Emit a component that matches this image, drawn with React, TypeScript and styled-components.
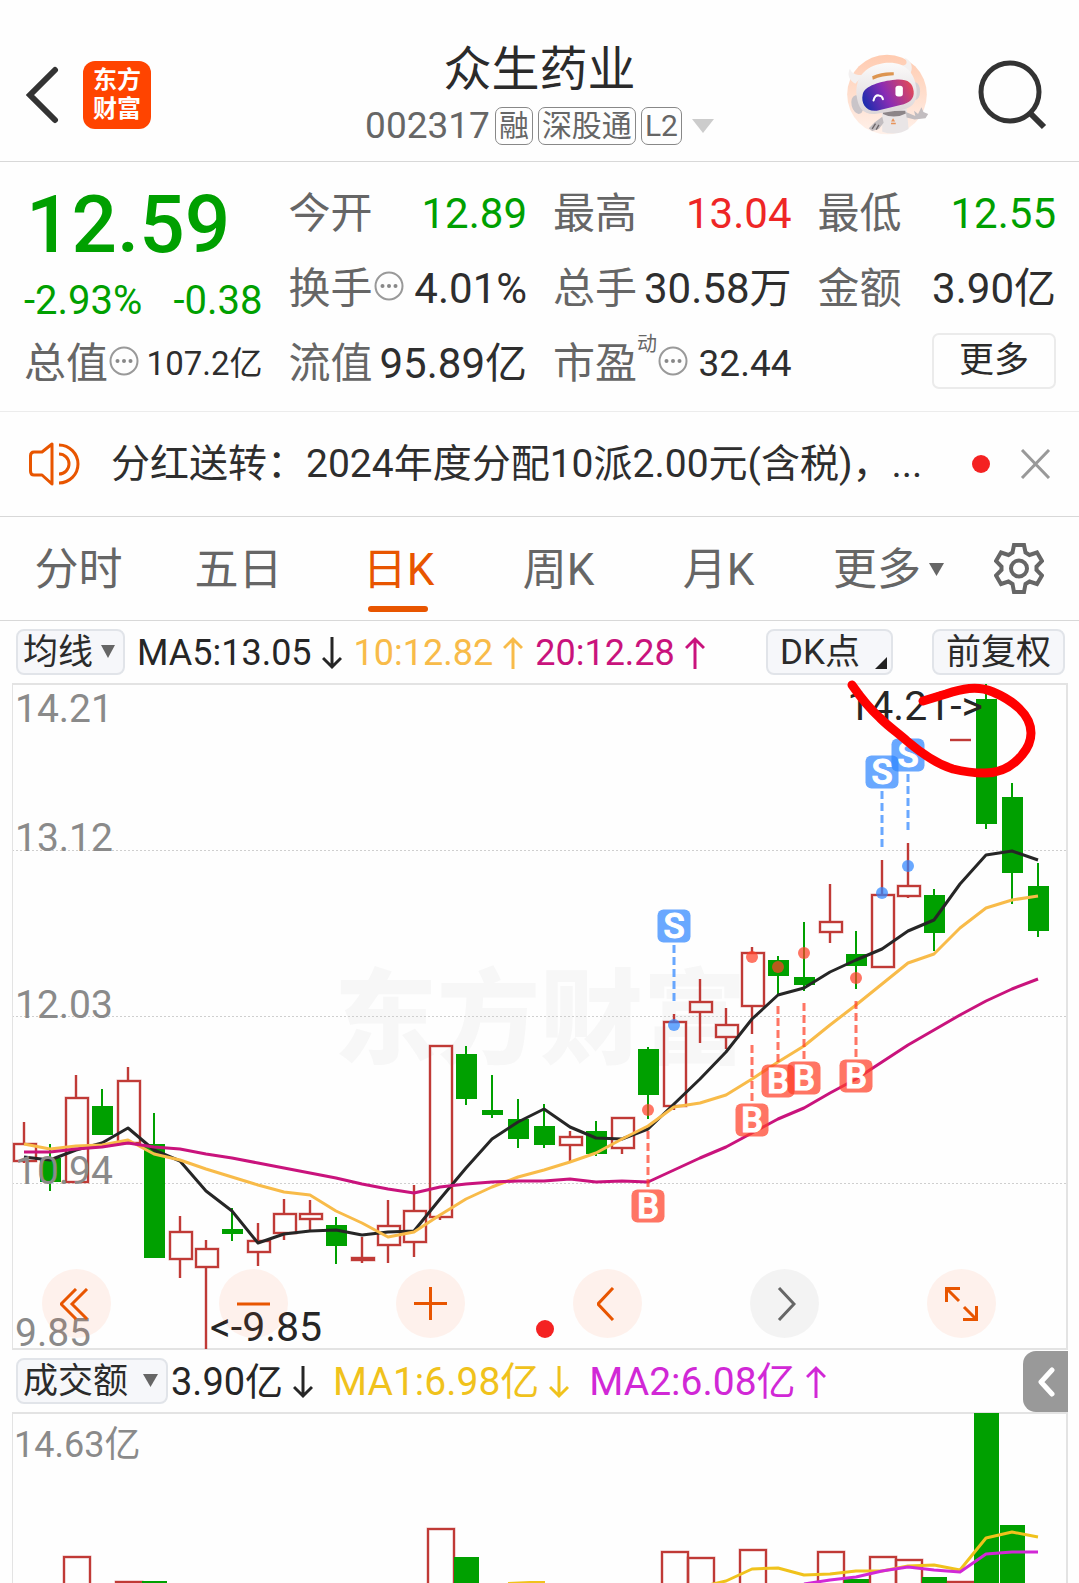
import React from 'react';
import styled, { createGlobalStyle } from 'styled-components';

const FONT = 'Roboto, "Noto Sans CJK SC", sans-serif';
const GREEN = '#00a000';
const RED = '#c03a36';
const ORANGE = '#e85500';

const Global = createGlobalStyle`
  *, *::before, *::after { box-sizing: border-box; }
  body { margin: 0; background: #fefefe; color: #2b2b2b; font-family: ${FONT}; }
  button, select { font: inherit; color: inherit; border: 0; background: none; padding: 0; margin: 0; cursor: pointer; }
  svg { display: block; flex: none; }
  h1, p { margin: 0; font-weight: 400; }
`;

const Page = styled.main`
  display: flex;
  flex-direction: column;
  overflow: hidden;
`;

/* ---------- header ---------- */
const Header = styled.header`
  display: grid;
  grid-template-columns: 1fr auto 1fr;
  align-items: center;
  height: 162px;
  padding: 28px 26px 0;
  border-bottom: 1px solid #d8d8d8;
`;
const HeaderSide = styled.div<{ $end?: boolean }>`
  display: flex;
  align-items: center;
  justify-content: ${p => (p.$end ? 'flex-end' : 'flex-start')};
  gap: ${p => (p.$end ? '38px' : '24px')};
  padding-right: ${p => (p.$end ? '6px' : '0')};
`;
const Logo = styled.a`
  display: grid;
  place-content: center;
  width: 68px;
  height: 68px;
  border-radius: 12px;
  background: #ff4400;
  color: #fff;
  font-size: 24px;
  line-height: 29px;
  font-weight: 700;
  text-decoration: none;
`;
const TitleBlock = styled.div`
  display: flex;
  flex-direction: column;
  align-items: center;
  gap: 12px;
`;
const Title = styled.h1`
  font-size: 48px;
  line-height: 50px;
`;
const CodeButton = styled.button`
  display: flex;
  align-items: center;
  gap: 4px;
  color: #666;
  font-size: 37px;
  line-height: 38px;
`;
const Tag = styled.span`
  height: 38px;
  margin-left: 1px;
  padding: 0 3px;
  border: 1px solid #888;
  border-radius: 7px;
  font-size: 30px;
  line-height: 36px;
`;
const CodeCaret = styled.svg`
  margin-left: 6px;
`;

/* ---------- quote ---------- */
const Quote = styled.section`
  display: grid;
  grid-template-columns: repeat(4, 1fr);
  grid-template-rows: repeat(3, 75px);
  column-gap: 26px;
  padding: 14px 23px 10px 24px;
  border-bottom: 1px solid #ececec;
`;
const PriceBlock = styled.div`
  grid-row: span 2;
  color: ${GREEN};
`;
const Price = styled.p`
  padding-left: 2px;
  font-size: 80px;
  line-height: 98px;
  font-weight: 500;
`;
const Change = styled.p`
  display: flex;
  justify-content: space-between;
  font-size: 40px;
  line-height: 54px;
`;
const Cell = styled.div`
  display: flex;
  align-items: center;
  white-space: nowrap;
`;
const CellLabel = styled.span`
  color: #666;
  font-size: 42px;
  line-height: 75px;
`;
const CellSup = styled.span`
  align-self: flex-start;
  margin-top: 8px;
  color: #666;
  font-size: 20px;
  line-height: 20px;
`;
const CellValue = styled.span<{ $color?: string; $size?: number }>`
  margin-left: auto;
  color: ${p => p.$color ?? '#2e2e2e'};
  font-size: ${p => p.$size ?? 42}px;
  line-height: 75px;
`;
const MoreButton = styled.button`
  justify-self: end;
  align-self: center;
  width: 124px;
  height: 56px;
  margin-bottom: 6px;
  border: 2px solid #ebebeb;
  border-radius: 7px;
  font-size: 35px;
  line-height: 50px;
`;

/* ---------- notice ---------- */
const Notice = styled.section`
  display: flex;
  align-items: center;
  height: 105px;
  padding: 0 28px 1px 28px;
  border-bottom: 1px solid #d8d8d8;
`;
const NoticeText = styled.p`
  flex: 1;
  margin-left: 31px;
  white-space: nowrap;
  overflow: hidden;
  font-size: 39px;
  line-height: 60px;
  color: #2e2e2e;
`;
const Dot = styled.span`
  width: 18px;
  height: 18px;
  margin-right: 30px;
  border-radius: 50%;
  background: #f42222;
`;

/* ---------- tabs ---------- */
const Tabs = styled.nav`
  display: grid;
  grid-template-columns: repeat(5, 160fr) 180fr 99fr;
  height: 104px;
  border-bottom: 1px solid #d8d8d8;
`;
const Tab = styled.button<{ $active?: boolean }>`
  position: relative;
  display: flex;
  align-items: center;
  justify-content: center;
  gap: 8px;
  padding: 2px 3px 0 0;
  color: ${p => (p.$active ? ORANGE : '#666')};
  font-size: 44px;
  line-height: 60px;
  &::after {
    content: '';
    display: ${p => (p.$active ? 'block' : 'none')};
    position: absolute;
    bottom: 8px;
    left: 50%;
    width: 60px;
    height: 6px;
    margin-left: -32px;
    border-radius: 3px;
    background: ${ORANGE};
  }
`;
const GearButton = styled.button`
  padding: 0 0 1px 14px;
`;

/* ---------- indicator bars ---------- */
const IndicatorBar = styled.div`
  display: flex;
  align-items: center;
  height: 62px;
  padding: 0 14px 0 16px;
  white-space: nowrap;
`;
const SelectBox = styled.label<{ $width: number }>`
  position: relative;
  width: ${p => p.$width}px;
  height: 46px;
  border: 2px solid #e1e4e9;
  border-radius: 8px;
  background: #f6f7fa;
  select {
    width: 100%;
    height: 100%;
    padding: 2px 0 0 5px;
    appearance: none;
    font-size: 35px;
    line-height: 40px;
    outline: none;
  }
  svg {
    position: absolute;
    right: 8px;
    top: 14px;
    pointer-events: none;
  }
`;
const ChipButton = styled.button<{ $gap?: boolean }>`
  display: flex;
  align-items: center;
  height: 46px;
  padding: 2px ${p => (p.$gap ? '4px' : '12px')} 0 12px;
  margin-left: ${p => (p.$gap ? 'auto' : '39px')};
  gap: 15px;
  border: 2px solid #e1e4e9;
  border-radius: 8px;
  background: #f6f7fa;
  font-size: 35px;
  line-height: 40px;
  svg { align-self: flex-end; margin-bottom: 4px; }
`;
const Reading = styled.span<{ $color: string; $size: number; $lead: number }>`
  display: flex;
  align-items: center;
  gap: 10px;
  margin-left: ${p => p.$lead}px;
  padding-top: 1px;
  color: ${p => p.$color};
  font-size: ${p => p.$size}px;
  line-height: 60px;
`;
const SideTab = styled.button`
  display: grid;
  place-items: center;
  width: 45px;
  height: 61px;
  margin: 1px -3px 0 auto;
  border-radius: 13px 0 0 13px;
  background: #999;
`;

/* ---------- charts ---------- */
const ChartArea = styled.section`
  position: relative;
  margin: 0 11px 0 12px;
`;
const ChartSvg = styled.svg`
  width: 100%;
  height: auto;
  overflow: visible;
  font-family: ${FONT};
`;
const Controls = styled.div`
  position: absolute;
  left: 30px;
  right: 72px;
  bottom: 12px;
  display: flex;
  justify-content: space-between;
`;
const RoundButton = styled.button<{ $muted?: boolean }>`
  display: grid;
  place-items: center;
  width: 69px;
  height: 69px;
  border-radius: 50%;
  background: ${p => (p.$muted ? 'rgba(0,0,0,0.045)' : 'rgba(255,95,20,0.08)')};
  color: ${p => (p.$muted ? '#666' : ORANGE)};
`;

const X0 = 24;
const STEP = 26;
const cx = (i: number) => X0 + i * STEP;

type Candle = ['r' | 'g', number, number, number, number];
const candles: Candle[] = [
  ['r', 1122, 1144, 1161, 1163], ['g', 1144, 1158, 1182, 1191], ['r', 1075, 1098, 1182, 1183],
  ['g', 1089, 1106, 1135, 1135], ['r', 1067, 1081, 1143, 1143], ['g', 1113, 1144, 1258, 1258],
  ['r', 1216, 1232, 1259, 1278], ['r', 1240, 1249, 1267, 1349], ['g', 1208, 1229, 1234, 1241],
  ['r', 1223, 1241, 1252, 1266], ['r', 1199, 1214, 1233, 1240], ['r', 1200, 1214, 1219, 1230],
  ['g', 1217, 1225, 1246, 1264], ['r', 1237, 1258, 1260, 1263], ['r', 1200, 1226, 1245, 1263],
  ['r', 1185, 1211, 1242, 1257], ['r', 1045, 1046, 1217, 1220], ['g', 1046, 1054, 1099, 1105],
  ['g', 1075, 1110, 1115, 1118], ['g', 1099, 1119, 1139, 1148], ['g', 1104, 1126, 1145, 1148],
  ['r', 1131, 1137, 1145, 1162], ['g', 1121, 1131, 1154, 1156], ['r', 1117, 1118, 1148, 1154],
  ['g', 1047, 1049, 1095, 1119], ['r', 1014, 1022, 1106, 1110], ['r', 979, 1002, 1012, 1043],
  ['r', 1008, 1025, 1037, 1049], ['r', 947, 953, 1006, 1034], ['g', 956, 960, 976, 994],
  ['g', 922, 977, 985, 991], ['r', 884, 922, 932, 943], ['g', 931, 954, 966, 989],
  ['r', 860, 895, 967, 968], ['r', 843, 886, 896, 898], ['g', 889, 895, 933, 951],
  ['r', 740, 740, 740, 740], ['g', 684, 699, 824, 829], ['g', 783, 797, 873, 904],
  ['g', 863, 886, 931, 937],
];

const ma5 = [1157, 1160, 1150, 1143, 1128, 1150, 1161, 1191, 1211, 1243, 1234, 1231, 1230, 1235, 1232, 1231, 1199, 1168, 1139, 1122, 1109, 1127, 1138, 1139, 1129, 1104, 1079, 1052, 1019, 995, 988, 972, 960, 949, 931, 920, 884, 855, 851, 860];
const ma10 = [1144, 1149, 1146, 1145, 1140, 1154, 1160, 1169, 1177, 1185, 1192, 1195, 1211, 1223, 1237, 1232, 1215, 1199, 1187, 1177, 1170, 1162, 1153, 1139, 1126, 1107, 1103, 1095, 1079, 1062, 1046, 1025, 1005, 984, 963, 954, 928, 908, 900, 896];
const ma20 = [1152, 1152, 1149, 1147, 1143, 1147, 1149, 1154, 1158, 1163, 1168, 1173, 1178, 1184, 1189, 1193, 1187, 1184, 1182, 1181, 1181, 1179, 1182, 1181, 1182, 1170, 1158, 1147, 1133, 1119, 1108, 1093, 1079, 1062, 1045, 1030, 1015, 1001, 989, 979];

const line = (ys: number[], from = 0) => ys.map((y, k) => `${cx(from + k)},${y}`).join(' ');

interface Marker { i: number; kind: 'S' | 'B'; y: number; dash: number; dot: number }
const markers: Marker[] = [
  { i: 25, kind: 'S', y: 926, dash: 945, dot: 1025 },
  { i: 33, kind: 'S', y: 772, dash: 791, dot: 893 },
  { i: 34, kind: 'S', y: 755, dash: 774, dot: 866 },
  { i: 24, kind: 'B', y: 1206, dash: 1131, dot: 1110 },
  { i: 28, kind: 'B', y: 1120, dash: 1045, dot: 957 },
  { i: 29, kind: 'B', y: 1081, dash: 1006, dot: 967 },
  { i: 30, kind: 'B', y: 1078, dash: 1003, dot: 953 },
  { i: 32, kind: 'B', y: 1076, dash: 1001, dot: 978 },
];

const volumes: [number, 'r' | 'g', number][] = [
  [2, 'r', 1557], [4, 'r', 1582], [5, 'g', 1581], [16, 'r', 1529], [17, 'g', 1557],
  [25, 'r', 1552], [26, 'r', 1558], [28, 'r', 1550], [31, 'r', 1552], [32, 'g', 1579],
  [33, 'r', 1557], [34, 'r', 1560], [35, 'g', 1577], [36, 'r', 1582], [37, 'g', 1413], [38, 'g', 1525],
];
const volMa1 = [1587, 1581, 1569, 1568, 1575, 1574, 1571, 1571, 1566, 1565, 1570, 1538, 1532, 1537];
const volMa2 = [1584, 1580, 1577, 1571, 1567, 1570, 1572, 1554, 1552, 1552];

const levels: [string, number][] = [['14.21', 722], ['13.12', 851], ['12.03', 1018], ['10.94', 1184], ['9.85', 1346]];

function KChart() {
  return (
    <ChartSvg viewBox="12 683 1056 667" role="img" aria-label="日K">
      <text x="540" y="1056" textAnchor="middle" fontSize="103" fontWeight="900" fill="#f7f7f7">东方财富</text>
      <g stroke="#cfcfcf" strokeDasharray="2 2">
        {[851, 1017, 1184].map(y => <line key={y} x1="12" x2="1068" y1={y - 0.5} y2={y - 0.5} />)}
      </g>
      <path d="M12.5 684V1349" stroke="#e3e3e3" />
      <path d="M1067 684V1349M12 684H1068M12 1349H1068" stroke="#e3e3e3" strokeWidth="2" />
      {candles.map(([kind, hi, top, bottom, lo], i) => {
        const x = cx(i);
        if (kind === 'g') {
          return (
            <g key={i} fill={GREEN}>
              <rect x={x - 1} y={hi} width="2" height={lo - hi} />
              <rect x={x - 10} y={top} width="21" height={bottom - top} />
            </g>
          );
        }
        return (
          <g key={i}>
            {[{ w: 3, o: 0.4 }, { w: 2, o: 1 }].map(s => (
              <g key={s.w} stroke={RED} strokeWidth={s.w} strokeOpacity={s.o} fill="none">
                <path d={`M${x} ${hi}V${top}M${x} ${bottom}V${lo}`} />
                {bottom > top
                  ? <rect x={x - 10} y={top} width="22" height={bottom - top} />
                  : <path d={`M${x - 10} ${top}h21`} />}
              </g>
            ))}
          </g>
        );
      })}
      <g fill="none" strokeWidth="3" strokeLinejoin="round">
        <polyline points={line(ma5)} stroke="#262626" />
        <polyline points={line(ma10)} stroke="#f8bb49" />
        <polyline points={line(ma20)} stroke="#c9137c" />
      </g>
      {markers.map(m => {
        const x = cx(m.i);
        const color = m.kind === 'S' ? '#2f86ff' : '#ff4028';
        return (
          <g key={m.i}>
            <line x1={x} x2={x} y1={m.dash} y2={m.dash + 56} stroke={color} strokeOpacity="0.72" strokeWidth="3" strokeDasharray="8 4" />
            <circle cx={x} cy={m.dot} r="6" fill={color} fillOpacity="0.72" />
            <rect x={x - 16.5} y={m.y - 16.5} width="33" height="33" rx="6" fill={color} fillOpacity="0.72" />
            <text x={x} y={m.y + 12} textAnchor="middle" fontSize="35" fontWeight="500" fill="#fff" stroke="#fff" strokeWidth="1">{m.kind}</text>
          </g>
        );
      })}
      <g fill="#8a8a8a" fontSize="39">
        {levels.map(([t, y]) => <text key={t} x="15" y={y}>{t}</text>)}
      </g>
      <g fill="#262626" fontSize="41">
        <text x="210" y="1341">&lt;-9.85</text>
        <text x="983" y="720" textAnchor="end">14.21-&gt;</text>
      </g>
      <circle cx="545" cy="1329" r="9" fill="#f42222" />
      <path
        d="M852 685C861 698 869 708 880 718C889 727 898 733 907 741C921 753 937 764 953 769C965 772 974 773 985 773C1000 773 1013 766 1022 755C1028 748 1031 741 1031 733C1031 714 1012 700 993 692C977 685 961 689 946 694L923 701"
        fill="none" stroke="#ff0000" strokeWidth="9" strokeLinecap="round" strokeLinejoin="round"
      />
    </ChartSvg>
  );
}

function VolumeChart() {
  return (
    <ChartSvg viewBox="12 1412 1056 171" role="img" aria-label="成交额">
      <path d="M12.5 1413V1583" stroke="#e3e3e3" />
      <path d="M1067 1413V1583M12 1413H1068" stroke="#e3e3e3" strokeWidth="2" />
      <text x="14" y="1457" fontSize="36" fill="#8a8a8a">14.63亿</text>
      {volumes.map(([i, kind, y]) =>
        kind === 'g'
          ? <rect key={i} x={cx(i) - 12} y={y} width="25" height={1583 - y} fill={GREEN} />
          : (
            <g key={i} fill="none" stroke={RED}>
              <path d={`M${cx(i) - 12} 1583V${y}h26V1583`} strokeWidth="3" strokeOpacity="0.4" />
              <path d={`M${cx(i) - 12} 1583V${y}h26V1583`} strokeWidth="2" />
            </g>
          ))}
      <g fill="none" strokeWidth="3" strokeLinejoin="round">
        <path d="M508 1583L530 1582H545" stroke="#f0c21c" strokeWidth="2" />
        <polyline points={line(volMa1, 26)} stroke="#f0c21c" />
        <polyline points={line(volMa2, 30)} stroke="#d128d6" />
      </g>
    </ChartSvg>
  );
}

/* ---------- icons ---------- */
const Triangle = ({ w, h, color }: { w: number; h: number; color: string }) => (
  <svg width={w} height={h} viewBox="0 0 10 10" preserveAspectRatio="none" aria-hidden="true">
    <path d="M0 0H10L5 10Z" fill={color} />
  </svg>
);

const Arrow = ({ up }: { up?: boolean }) => (
  <svg width="20" height="34" viewBox="0 0 20 34" fill="none" stroke="currentColor" strokeWidth="3" aria-hidden="true">
    {up ? <path d="M10 33V3M1 12L10 3L19 12" /> : <path d="M10 1V31M1 22L10 31L19 22" />}
  </svg>
);

const InfoDots = () => (
  <svg width="31" height="38" viewBox="0 0 31 38" aria-hidden="true">
    <circle cx="16" cy="16" r="13.5" fill="none" stroke="#999" strokeWidth="2" />
    <circle cx="9.5" cy="16" r="2" fill="#888" />
    <circle cx="16" cy="16" r="2" fill="#888" />
    <circle cx="22.500" cy="16" r="2" fill="#888" />
  </svg>
);

const Robot = () => (
  <svg width="84" height="81" viewBox="24 28 248 240" aria-hidden="true">
    <defs>
      <linearGradient id="sky" x1="0" y1="0" x2="0" y2="1">
        <stop offset="0" stopColor="#ffcbb0" />
        <stop offset="1" stopColor="#fff1ea" />
      </linearGradient>
      <linearGradient id="visor" x1="0" y1="0.6" x2="1" y2="0.3">
        <stop offset="0" stopColor="#1f2cae" />
        <stop offset="0.45" stopColor="#8a2cb4" />
        <stop offset="1" stopColor="#e0485a" />
      </linearGradient>
      <linearGradient id="shell" x1="0" y1="0" x2="0" y2="1">
        <stop offset="0" stopColor="#fbfafa" />
        <stop offset="1" stopColor="#dcd6d8" />
      </linearGradient>
    </defs>
    <circle cx="148" cy="148" r="118" fill="url(#sky)" />
    <path d="M54 116C34 106 30 88 38 72C44 88 60 92 78 90ZM184 62C208 64 212 52 198 38C222 46 228 70 214 92Z" fill="#f3f0f0" />
    <path d="M134 192L206 188L212 250Q176 272 134 258Z" fill="#e9e5e6" />
    <path d="M136 206Q170 222 204 204L202 196H136Z" fill="#8c8588" />
    <path d="M160 228h12l-6-10zM160 232h14v4h-14z" fill="#e8935a" />
    <path d="M204 200L232 212L228 196L240 206L250 186L256 200L270 206L262 218L230 222L206 216Z" fill="#c2bdc0" />
    <path d="M134 214L112 230L94 248L104 256L124 250L138 232Z" fill="#c2bdc0" />
    <path d="M104 250l10-16M116 252l8-14" stroke="#6d6669" strokeWidth="4" />
    <ellipse cx="60" cy="178" rx="17" ry="28" fill="#c9c4c8" transform="rotate(-14 60 178)" />
    <ellipse cx="232" cy="138" rx="14" ry="26" fill="#d6d1d4" />
    <path d="M58 152C52 90 92 60 146 54C200 50 230 82 235 128C240 172 222 188 190 194L112 206C78 208 62 188 58 152Z" fill="url(#shell)" />
    <path d="M104 94Q134 80 168 82V91Q134 92 106 104Z" fill="#dd9550" />
    <path d="M76 148C80 122 130 108 172 104C208 101 224 112 227 138C229 160 216 173 188 179L118 196C86 200 70 174 76 148Z" fill="url(#visor)" />
    <path d="M108 166Q112 148 124 151Q134 152 136 162" fill="none" stroke="#fff" strokeWidth="6" strokeLinecap="round" />
    <rect x="173" y="122" width="22" height="32" rx="8" fill="#fff" />
  </svg>
);

const GEAR = 'M20 3H30L31.500 10.500L35.500 13L43 10.500L48 19L42.500 24.500V28L48 33.500L43 42L35.500 39.500L31.500 42L30 50H20L18.500 42L14.500 39.500L7 42L2 33.500L7.500 28V24.500L2 19L7 10.500L14.500 13L18.500 10.500Z';

export default function App() {
  return (
    <Page>
      <Global />
      <Header>
        <HeaderSide>
          <button aria-label="返回">
            <svg width="33" height="58" viewBox="0 0 33 58" fill="none" stroke="#333" strokeWidth="6" strokeLinecap="round">
              <path d="M29 4L4 29L29 54" />
            </svg>
          </button>
          <Logo href="#home"><span>东方</span><span>财富</span></Logo>
        </HeaderSide>
        <TitleBlock>
          <Title>众生药业</Title>
          <CodeButton>
            002317<Tag>融</Tag><Tag>深股通</Tag><Tag>L2</Tag>
            <CodeCaret width="22" height="14" viewBox="0 0 22 14"><path d="M0 0H22L11 14Z" fill="#ccc" /></CodeCaret>
          </CodeButton>
        </TitleBlock>
        <HeaderSide $end>
          <button aria-label="助手"><Robot /></button>
          <button aria-label="搜索">
            <svg width="80" height="74" viewBox="0 0 80 74" fill="none" stroke="#333" strokeWidth="5">
              <circle cx="43" cy="34" r="29" />
              <path d="M63 55L77 69" strokeWidth="6" />
            </svg>
          </button>
        </HeaderSide>
      </Header>

      <Quote>
        <PriceBlock>
          <Price>12.59</Price>
          <Change><span>-2.93%</span><span>-0.38</span></Change>
        </PriceBlock>
        <Cell><CellLabel>今开</CellLabel><CellValue $color={GREEN}>12.89</CellValue></Cell>
        <Cell><CellLabel>最高</CellLabel><CellValue $color="#ee2626">13.04</CellValue></Cell>
        <Cell><CellLabel>最低</CellLabel><CellValue $color={GREEN}>12.55</CellValue></Cell>
        <Cell><CellLabel>换手</CellLabel><InfoDots /><CellValue>4.01%</CellValue></Cell>
        <Cell><CellLabel>总手</CellLabel><CellValue>30.58万</CellValue></Cell>
        <Cell><CellLabel>金额</CellLabel><CellValue>3.90亿</CellValue></Cell>
        <Cell><CellLabel>总值</CellLabel><InfoDots /><CellValue $size={33}>107.2亿</CellValue></Cell>
        <Cell><CellLabel>流值</CellLabel><CellValue>95.89亿</CellValue></Cell>
        <Cell><CellLabel>市盈</CellLabel><CellSup>动</CellSup><InfoDots /><CellValue $size={37}>32.44</CellValue></Cell>
        <MoreButton>更多</MoreButton>
      </Quote>

      <Notice>
        <svg width="52" height="46" viewBox="0 0 52 46" fill="none" stroke={ORANGE} strokeWidth="3" strokeLinejoin="round" aria-hidden="true">
          <path d="M24 3V43L14 34H6Q2.500 34 2.500 30V15Q2.500 11 6 11H14Z" />
          <path d="M31 13A10 10 0 0 1 31 33M31 4A19 19 0 0 1 31 42" />
        </svg>
        <NoticeText>分红送转：2024年度分配10派2.00元(含税)，...</NoticeText>
        <Dot />
        <button aria-label="关闭">
          <svg width="31" height="30" viewBox="0 0 31 30" stroke="#999" strokeWidth="3"><path d="M2 1L29 29M29 1L2 29" /></svg>
        </button>
      </Notice>

      <Tabs>
        <Tab>分时</Tab>
        <Tab>五日</Tab>
        <Tab $active>日K</Tab>
        <Tab>周K</Tab>
        <Tab>月K</Tab>
        <Tab>更多<Triangle w={15} h={13} color="#666" /></Tab>
        <GearButton aria-label="设置">
          <svg width="50" height="53" viewBox="0 0 50 53" fill="none" stroke="#666" strokeWidth="4">
            <path d={GEAR} />
            <circle cx="25" cy="26.500" r="8" />
          </svg>
        </GearButton>
      </Tabs>

      <IndicatorBar>
        <SelectBox $width={109}>
          <select aria-label="均线"><option>均线</option></select>
          <Triangle w={14} h={13} color="#666" />
        </SelectBox>
        <Reading $color="#262626" $size={36} $lead={12}>MA5:13.05<Arrow /></Reading>
        <Reading $color="#f8bb49" $size={36} $lead={12}>10:12.82<Arrow up /></Reading>
        <Reading $color="#c9137c" $size={36} $lead={12}>20:12.28<Arrow up /></Reading>
        <ChipButton $gap>
          DK点
          <svg width="12" height="12" viewBox="0 0 12 12" aria-hidden="true"><path d="M12 0V12H0Z" fill="#222" /></svg>
        </ChipButton>
        <ChipButton>前复权</ChipButton>
      </IndicatorBar>

      <ChartArea>
        <KChart />
        <Controls>
          <RoundButton aria-label="最左">
            <svg width="34" height="32" viewBox="0 0 34 32" fill="none" stroke="currentColor" strokeWidth="3"><path d="M16 1L1 16L16 31M27 1L12 16L27 31" /></svg>
          </RoundButton>
          <RoundButton aria-label="缩小">
            <svg width="34" height="34" viewBox="0 0 34 34" stroke="currentColor" strokeWidth="3"><path d="M0 17H33" /></svg>
          </RoundButton>
          <RoundButton aria-label="放大">
            <svg width="34" height="34" viewBox="0 0 34 34" stroke="currentColor" strokeWidth="3"><path d="M0 16.500H33M16.500 0V33" /></svg>
          </RoundButton>
          <RoundButton aria-label="向左">
            <svg width="22" height="34" viewBox="0 0 22 34" fill="none" stroke="currentColor" strokeWidth="3"><path d="M16 1L1 17L16 33" /></svg>
          </RoundButton>
          <RoundButton $muted aria-label="向右">
            <svg width="22" height="34" viewBox="0 0 22 34" fill="none" stroke="currentColor" strokeWidth="3"><path d="M5 1L20 17L5 33" /></svg>
          </RoundButton>
          <RoundButton aria-label="全屏">
            <svg width="36" height="36" viewBox="0 0 36 36" fill="none" stroke="currentColor" strokeWidth="3">
              <path d="M2.500 16V2.500H16M2.500 2.500L15 15M32.500 20V33.500H19M32.500 33.500L20 21" />
            </svg>
          </RoundButton>
        </Controls>
      </ChartArea>

      <IndicatorBar>
        <SelectBox $width={152}>
          <select aria-label="成交额"><option>成交额</option></select>
          <Triangle w={15} h={13} color="#666" />
        </SelectBox>
        <Reading $color="#262626" $size={38} $lead={3}>3.90亿<Arrow /></Reading>
        <Reading $color="#f0c21c" $size={39} $lead={20}>MA1:6.98亿<Arrow /></Reading>
        <Reading $color="#d128d6" $size={39} $lead={20}>MA2:6.08亿<Arrow up /></Reading>
        <SideTab aria-label="展开">
          <svg width="18" height="32" viewBox="0 0 18 32" fill="none" stroke="#fff" strokeWidth="5" strokeLinecap="round" strokeLinejoin="round"><path d="M15 4L4 16L15 28" /></svg>
        </SideTab>
      </IndicatorBar>

      <ChartArea>
        <VolumeChart />
      </ChartArea>
    </Page>
  );
}
